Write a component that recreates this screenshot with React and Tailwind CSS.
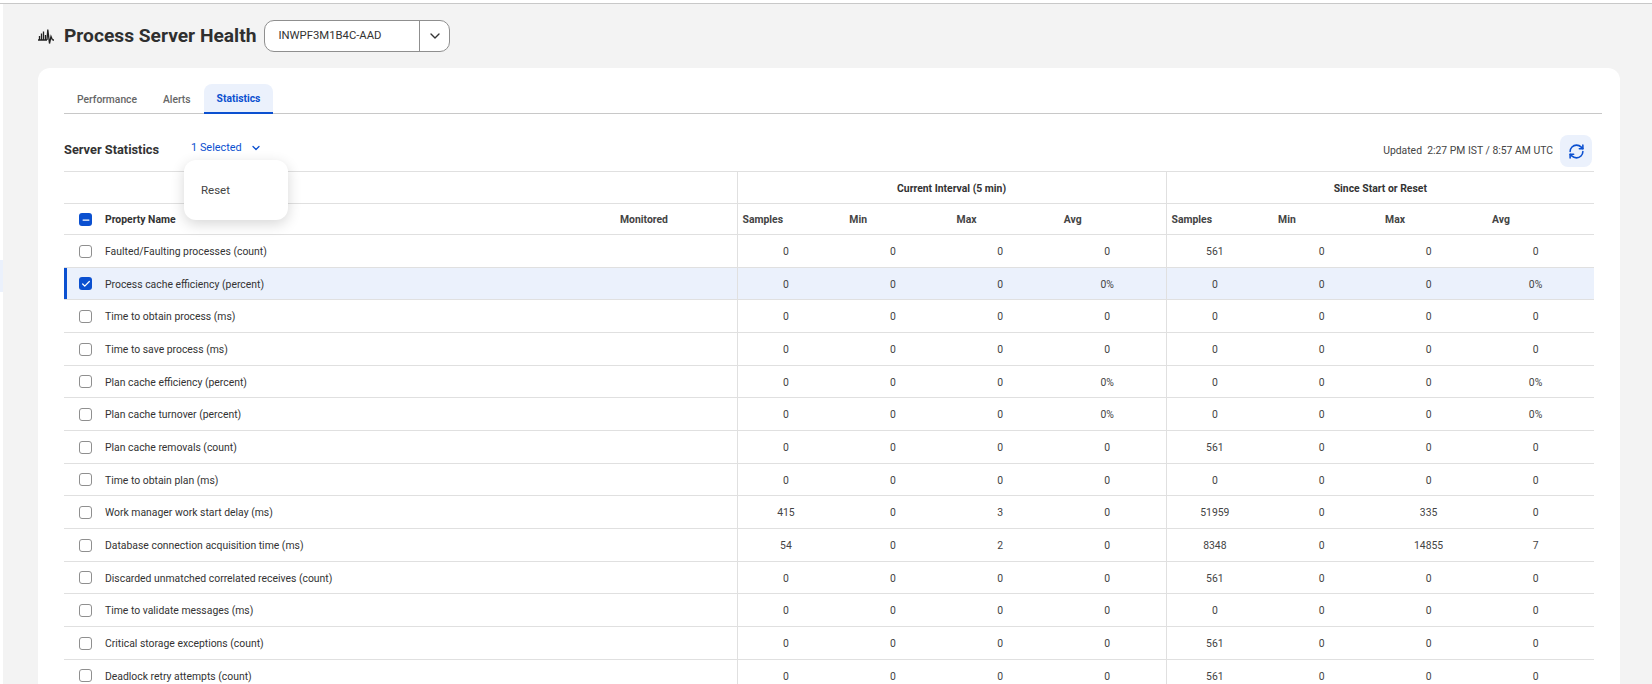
import { Check, ChevronDown, Minus, RefreshCw } from "lucide-react";

const rows = [
  ["Faulted/Faulting processes (count)", 0, 0, 0, 0, 561, 0, 0, 0],
  ["Process cache efficiency (percent)", 0, 0, 0, "0%", 0, 0, 0, "0%"],
  ["Time to obtain process (ms)", 0, 0, 0, 0, 0, 0, 0, 0],
  ["Time to save process (ms)", 0, 0, 0, 0, 0, 0, 0, 0],
  ["Plan cache efficiency (percent)", 0, 0, 0, "0%", 0, 0, 0, "0%"],
  ["Plan cache turnover (percent)", 0, 0, 0, "0%", 0, 0, 0, "0%"],
  ["Plan cache removals (count)", 0, 0, 0, 0, 561, 0, 0, 0],
  ["Time to obtain plan (ms)", 0, 0, 0, 0, 0, 0, 0, 0],
  ["Work manager work start delay (ms)", 415, 0, 3, 0, 51959, 0, 335, 0],
  ["Database connection acquisition time (ms)", 54, 0, 2, 0, 8348, 0, 14855, 7],
  ["Discarded unmatched correlated receives (count)", 0, 0, 0, 0, 561, 0, 0, 0],
  ["Time to validate messages (ms)", 0, 0, 0, 0, 0, 0, 0, 0],
  ["Critical storage exceptions (count)", 0, 0, 0, 0, 561, 0, 0, 0],
  ["Deadlock retry attempts (count)", 0, 0, 0, 0, 561, 0, 0, 0],
];

const metrics = ["Samples", "Min", "Max", "Avg"];

function Box({ state }) {
  if (state === "off") {
    return <span className="block size-[13px] rounded-[3px] border border-[#8f8f8f] bg-white" />;
  }
  return (
    <span className="flex size-[13px] items-center justify-center rounded-[3px] bg-[#0b50d0] text-white">
      {state === "on" ? <Check size={10} strokeWidth={3} /> : <Minus size={10} strokeWidth={3} />}
    </span>
  );
}

function PulseIcon() {
  return (
    <svg width="16" height="15" viewBox="0 0 16 15" fill="none" stroke="#222" strokeWidth="1.3" className="mr-[10px]">
      <path d="M0 11h9M14.5 11H16" />
      <path d="M1.5 11V7M3.5 11V4.5M5.5 11V2.5M7.5 11V6" />
      <path d="M9 11 9.8.5l1.7 14L13 7.5l1.5 3.5" />
    </svg>
  );
}

export default function App() {
  return (
    <div className="h-[684px] overflow-hidden bg-white font-['Roboto',sans-serif] text-[#333]">
      <div className="h-[4px] border-b border-[#c8c8c8] bg-white" />
      <div className="flex h-[680px]">
        <aside className="w-[3px] shrink-0 bg-white">
          <div className="mt-[256px] h-[32px] bg-[#ebf1fc]" />
        </aside>
        <main className="min-w-0 flex-1 bg-[#f3f3f3] pl-[35px] pr-[32px] pt-[16px]">
          <header className="flex h-[32px] items-center">
            <PulseIcon />
            <h1 className="text-[19.2px] font-bold leading-none text-[#2f2f2f]">Process Server Health</h1>
            <div className="ml-[8px] flex h-[32px] w-[186px] items-center rounded-[10px] border border-[#8f8f8f] bg-white">
              <span className="flex-1 pl-[13px] text-[11.3px]">INWPF3M1B4C-AAD</span>
              <span className="flex h-full w-[30px] items-center justify-center border-l border-[#8f8f8f]">
                <ChevronDown size={16} />
              </span>
            </div>
          </header>

          <section className="relative mt-[16px] h-[700px] rounded-t-xl bg-white pl-[26px] pr-[18px] pt-[16px]">
            <nav className="flex h-[30px] border-b border-[#c8c8c8] text-[10.3px] font-medium">
              <a className="flex items-center px-[13px] pt-[2px] text-[#666]">Performance</a>
              <a className="flex items-center px-[13px] pt-[2px] text-[#666]">Alerts</a>
              <a className="-mb-px flex items-center rounded-t-lg border-b-2 border-[#0b50d0] bg-[#ebf1fc] px-[13px] pt-[2px] font-bold text-[#0b50d0]">
                Statistics
              </a>
            </nav>

            <div className="mt-[21px] flex h-[32px] items-center pr-[10px]">
              <h2 className="mb-[2px] text-[12.8px] font-bold text-[#333]">Server Statistics</h2>
              <button className="mb-[6px] ml-[32px] flex items-center gap-[8px] text-[10.9px] text-[#0b50d0]">
                1 Selected <ChevronDown size={12} strokeWidth={2.5} />
              </button>
              <span className="ml-auto whitespace-pre text-[10.4px] text-[#444]">Updated  2:27 PM IST / 8:57 AM UTC</span>
              <button className="ml-[7px] flex size-[32px] items-center justify-center rounded-lg bg-[#ebf1fc] text-[#0b50d0]">
                <RefreshCw size={17} strokeWidth={2.2} />
              </button>
            </div>

            <div className="absolute left-[146px] top-[92px] z-10 h-[60px] w-[104px] rounded-xl bg-white pl-[17px] pt-[21px] text-[11.5px] leading-[18px] text-[#444] shadow-[0_4px_14px_rgba(0,0,0,0.16)]">
              Reset
            </div>

            <table className="mt-[4px] w-[1530px] table-fixed border-collapse text-[10.4px]">
              <colgroup>
                <col className="w-[41px]" />
                <col className="w-[509px]" />
                <col className="w-[123px]" />
                <col span="4" className="w-[107.25px]" />
                <col span="4" className="w-[107px]" />
              </colgroup>
              <thead>
                <tr className="h-[32px] border-y border-[#e0e0e0] font-bold">
                  <th colSpan="3" />
                  <th colSpan="4" className="border-l border-[#e0e0e0] pt-[2px] text-center font-bold">Current Interval (5 min)</th>
                  <th colSpan="4" className="border-l border-[#e0e0e0] pt-[2px] text-center font-bold">Since Start or Reset</th>
                </tr>
                <tr className="h-[31px] border-b border-[#e0e0e0]">
                  <th className="pl-[15px] pt-[1px]"><Box state="mixed" /></th>
                  <th className="pt-[2px] text-left font-bold">Property Name</th>
                  <th className="pl-[6px] pt-[2px] text-left font-bold text-[#444]">Monitored</th>
                  {metrics.map((m, i) => (
                    <th key={m} className={`pl-[5px] pt-[2px] text-left font-bold text-[#444] ${i === 0 ? "border-l border-[#e0e0e0]" : ""}`}>{m}</th>
                  ))}
                  {metrics.map((m, i) => (
                    <th key={m} className={`pl-[5px] pt-[2px] text-left font-bold text-[#444] ${i === 0 ? "border-l border-[#e0e0e0]" : ""}`}>{m}</th>
                  ))}
                </tr>
              </thead>
              <tbody>
                {rows.map(([name, ...vals], r) => (
                  <tr key={name} className={`h-[32.66px] border-b border-[#e0e0e0] ${r === 1 ? "bg-[#ebf1fc]" : ""}`}>
                    <td className={`pl-[15px] pt-[1px] ${r === 1 ? "shadow-[inset_3px_0_0_#0b50d0]" : ""}`}>
                      <Box state={r === 1 ? "on" : "off"} />
                    </td>
                    <td colSpan="2" className="pt-[2px] text-[#333]">{name}</td>
                    {vals.map((v, i) => (
                      <td key={i} className={`pr-[10px] pt-[2px] text-center text-[#444] ${i === 0 || i === 4 ? "border-l border-[#e0e0e0]" : ""}`}>{v}</td>
                    ))}
                  </tr>
                ))}
              </tbody>
            </table>
          </section>
        </main>
      </div>
    </div>
  );
}
